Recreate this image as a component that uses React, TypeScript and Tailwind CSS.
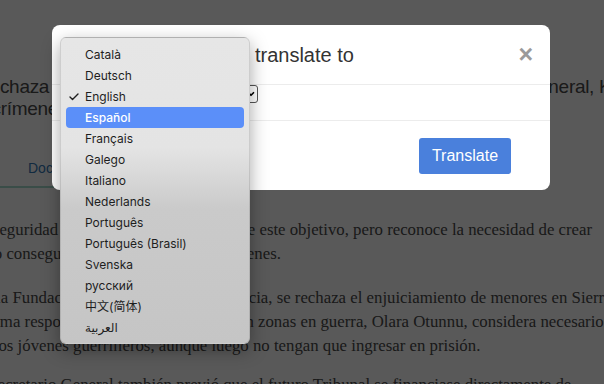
import { Check, ChevronDown } from "lucide-react";

const languages = [
  "Català",
  "Deutsch",
  "English",
  "Español",
  "Français",
  "Galego",
  "Italiano",
  "Nederlands",
  "Português",
  "Português (Brasil)",
  "Svenska",
  "русский",
  "中文(简体)",
  "العربية",
];

const serif = "font-['Liberation_Serif',serif]";
const sans = "font-['Liberation_Sans',Arial,sans-serif]";

const Article = () => (
  <main className="pt-[76px] text-[#4a4a4a]">
    <h1 className={`${sans} -ml-[44px] text-[19px] leading-[22px] tracking-[-0.3px] whitespace-nowrap`}>
      <div>Se rechaza el enjuiciamiento de niños soldado, asegura el Secretario General, Kofi Annan</div>
      <div>tras crímenes de guerra</div>
    </h1>

    <nav className={`${sans} -ml-[10px] mt-[38px] text-[14px] text-[#337ab7]`}>
      <div className="w-[110px] border-b-2 border-[#a6dccd] pb-[7px] pl-[38px]">Documento</div>
    </nav>

    <div className={`${serif} -ml-[50px] mt-[30px] text-[16.8px] leading-[24px] whitespace-nowrap`}>
      <p>
        <span className="block">Sin la seguridad real no es posible el logro de este objetivo, pero reconoce la necesidad de crear</span>
        <span className="block">sencillo conseguir su reincorporación de jóvenes.</span>
      </p>
      <p className="mt-[20px]">
        <span className="block">Desde la Fundación de Sierra Leona en Francia, se rechaza el enjuiciamiento de menores en Sierra Leona</span>
        <span className="block">la máxima responsable para niños soldado en zonas en guerra, Olara Otunnu, considera necesario juzgar</span>
        <span className="block">sólo a los jóvenes guerrilleros, aunque luego no tengan que ingresar en prisión.</span>
      </p>
      <p className="mt-[15px]">
        <span className="block">Ya el Secretario General también previó que el futuro Tribunal se financiase directamente de</span>
      </p>
    </div>
  </main>
);

const TranslateModal = () => (
  <div className={`${sans} absolute left-[52px] top-[25px] w-[498px] rounded-[8px] bg-white text-[#333]`}>
    <div className="flex h-[60px] items-center justify-between border-b border-[#ececec] pl-[15px] pr-[17px]">
      <h2 className="text-[20px]">Select a language to translate to</h2>
      <button className="text-[25px] font-bold leading-none text-[#9a9a9a]">×</button>
    </div>
    <div className="h-[36px] border-b border-[#ececec] pl-[15px]">
      <div className="flex h-[18px] w-[191px] items-center justify-between rounded-[3px] border border-[#555] pl-[4px] pr-[1px] text-[12px]">
        <span>English</span>
        <ChevronDown size={10} strokeWidth={4} className="text-black" />
      </div>
    </div>
    <div className="flex h-[69px] items-center justify-end pr-[39px]">
      <button className="h-[36px] w-[92px] rounded-[3px] bg-[#4a80dc] text-[16px] text-white">
        Translate
      </button>
    </div>
  </div>
);

const LanguageMenu = () => (
  <ul className="absolute left-[60px] top-[37px] w-[190px] rounded-[6px] border border-black/10 bg-[linear-gradient(180deg,#e6e6e6_0%,#e4e4e4_36%,#cacaca_56%,#c5c5c5_100%)] px-[5px] pt-[6px] pb-[5px] font-['Inter','Noto_Sans_CJK_SC','DejaVu_Sans',sans-serif] text-[12px] text-[#1e1e1e] shadow-[0_6px_18px_rgba(0,0,0,0.35)]">
    {languages.map((lang) => {
      const selected = lang === "English";
      const active = lang === "Español";
      return (
        <li
          key={lang}
          className={
            active
              ? "flex h-[21px] items-center rounded-[4px] bg-[#5b8ff9] pl-[19px] font-medium text-white"
              : "flex h-[21px] items-center pl-[19px]"
          }
        >
          {selected && <Check size={12} strokeWidth={2.75} className="-ml-[17px] mr-[5px]" />}
          {lang}
        </li>
      );
    })}
  </ul>
);

export default function App() {
  return (
    <div className="relative h-[384px] w-[604px] overflow-hidden bg-white">
      <Article />
      <div className="absolute inset-0 bg-black/65" />
      <TranslateModal />
      <LanguageMenu />
    </div>
  );
}
